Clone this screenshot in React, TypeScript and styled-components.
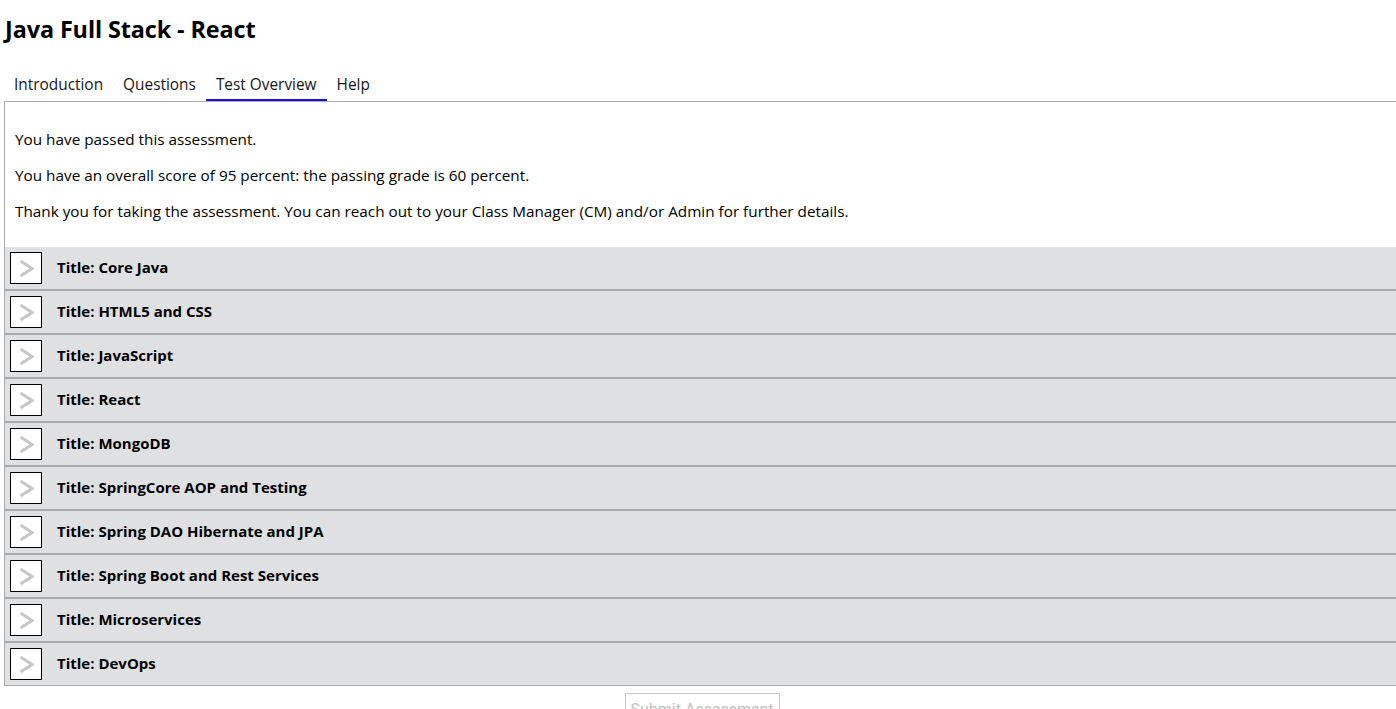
import React from "react";
import styled, { createGlobalStyle } from "styled-components";

const GlobalStyle = createGlobalStyle`
  html, body {
    margin: 0;
    padding: 0;
    overflow: hidden;
    background: #ffffff;
  }
  body {
    font-family: "Open Sans", "Noto Sans", "Liberation Sans", sans-serif;
    color: #161616;
  }
`;

const Page = styled.div`
  display: flex;
  flex-direction: column;
  padding: 0 0 0 4px;
`;

const Heading = styled.h1`
  margin: 14px 0 0 1px;
  font-size: 23.4px;
  line-height: 30px;
  font-weight: 700;
  color: #000;
  letter-spacing: -0.1px;
`;

const TabBar = styled.div`
  display: flex;
  margin-top: 26px;
`;

const Tab = styled.div<{ $active?: boolean }>`
  padding: 0 10px 1px;
  height: 32px;
  display: flex;
  align-items: center;
  font-size: 15.4px;
  color: #161616;
  border-bottom: 3px solid ${(p) => (p.$active ? "#1f10dc" : "transparent")};
  box-sizing: border-box;
  cursor: pointer;
`;

const Panel = styled.div`
  border: 1px solid #ababab;
  border-right: none;
  margin-top: -1px;
`;

const Intro = styled.div`
  padding: 11px 10px 10px;
`;

const Para = styled.p`
  margin: 16px 0;
  font-size: 15.3px;
  line-height: 20px;
  color: #000;
`;

const Row = styled.div`
  display: flex;
  align-items: center;
  height: 44px;
  box-sizing: border-box;
  background: #dfe0e2;
  border-bottom: 2px solid #a8a8a8;
  padding: 0 0 0 5px;
  gap: 15px;
  &:last-child {
    border-bottom: none;
    height: 42px;
  }
`;

const ToggleButton = styled.button`
  width: 32px;
  height: 32px;
  box-sizing: border-box;
  border: 1px solid #000;
  background: #fff;
  padding: 0;
  display: flex;
  align-items: center;
  justify-content: center;
  cursor: pointer;
`;

const RowTitle = styled.span`
  font-size: 15px;
  line-height: 20px;
  font-weight: 700;
  color: #000;
  margin-bottom: 2px;
`;

const Footer = styled.div`
  display: flex;
  justify-content: center;
  padding-top: 7px;
`;

const SubmitButton = styled.button`
  width: 155px;
  height: 32px;
  border: 1px solid #c8c8c8;
  background: #fff;
  color: #c0c0c0;
  font-family: Roboto, "Liberation Sans", sans-serif;
  font-size: 16px;
  padding: 0;
  margin-left: 4px;
`;

const Chevron = () => (
  <svg width="15" height="19" viewBox="0 0 15 19" aria-hidden="true">
    <polyline
      points="1.5,2 13,9.5 1.5,17"
      fill="none"
      stroke="#c6c6c6"
      strokeWidth="2.9"
      strokeLinejoin="miter"
    />
  </svg>
);

const sections = [
  "Core Java",
  "HTML5 and CSS",
  "JavaScript",
  "React",
  "MongoDB",
  "SpringCore AOP and Testing",
  "Spring DAO Hibernate and JPA",
  "Spring Boot and Rest Services",
  "Microservices",
  "DevOps",
];

const tabs = ["Introduction", "Questions", "Test Overview", "Help"];

export default function App() {
  return (
    <>
      <GlobalStyle />
      <Page>
        <Heading>Java Full Stack - React</Heading>
        <TabBar>
          {tabs.map((t) => (
            <Tab key={t} $active={t === "Test Overview"}>
              {t}
            </Tab>
          ))}
        </TabBar>
        <Panel>
          <Intro>
            <Para>You have passed this assessment.</Para>
            <Para>You have an overall score of 95 percent: the passing grade is 60 percent.</Para>
            <Para>
              Thank you for taking the assessment. You can reach out to your Class Manager (CM) and/or Admin for
              further details.
            </Para>
          </Intro>
          {sections.map((s) => (
            <Row key={s}>
              <ToggleButton aria-label={`Expand ${s}`}>
                <Chevron />
              </ToggleButton>
              <RowTitle>Title: {s}</RowTitle>
            </Row>
          ))}
        </Panel>
        <Footer>
          <SubmitButton disabled>Submit Assessment</SubmitButton>
        </Footer>
      </Page>
    </>
  );
}
